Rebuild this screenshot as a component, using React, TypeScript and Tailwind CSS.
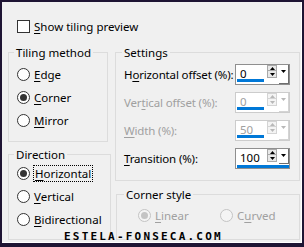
import type { ReactNode } from 'react';

const GRAY = 'text-[#a0a0a0]';

const Acc = ({ text, at }: { text: string; at: number }) => (
  <>
    {text.slice(0, at)}
    <span className="underline underline-offset-[2px]">{text[at]}</span>
    {text.slice(at + 1)}
  </>
);

const Radio = ({
  children,
  checked = false,
  disabled = false,
  focus = false,
}: {
  children: ReactNode;
  checked?: boolean;
  disabled?: boolean;
  focus?: boolean;
}) => (
  <div className="flex h-[23px] items-center">
    <span
      className={`flex h-[13px] w-[13px] shrink-0 items-center justify-center rounded-full border ${
        disabled ? 'border-[#c4c4c4] bg-[#f4f4f4]' : 'border-[#333333] bg-white'
      }`}
    >
      {checked && (
        <span className={`h-[7px] w-[7px] rounded-full ${disabled ? 'bg-[#c4c4c4]' : 'bg-[#333333]'}`} />
      )}
    </span>
    <span
      className={`leading-[15px] whitespace-nowrap ${disabled ? GRAY : 'text-black'} ${
        focus ? 'ml-[3px] border border-dotted border-black px-[1px]' : 'ml-[4px]'
      }`}
    >
      {children}
    </span>
  </div>
);

const Tri = ({ down = false, color }: { down?: boolean; color: string }) => (
  <svg width="5" height="3" viewBox="0 0 5 3" className="block">
    <path d={down ? 'M0 0H5L2.5 3Z' : 'M2.5 0L5 3H0Z'} fill={color} />
  </svg>
);

const Spin = ({ value, disabled = false, focus = false }: { value: string; disabled?: boolean; focus?: boolean }) => {
  const arrow = disabled ? '#b8b8b8' : '#000000';
  const btn = disabled ? 'border-[#d4d4d4] bg-[#f4f4f4]' : 'border-[#a8a8a8] bg-[#e8e8e8]';
  return (
    <div
      className={`relative flex h-[21px] w-[55px] shrink-0 border bg-white ${
        disabled ? 'border-[#cccccc]' : 'border-[#8f8f8f]'
      }`}
    >
      <div className={`w-[31px] pl-[4px] pt-[1px] leading-[15px] ${disabled ? GRAY : 'text-black'}`}>{value}</div>
      <div className="flex w-[10px] flex-col">
        <div className={`flex h-[6px] items-center justify-center border ${btn}`}>
          <Tri color={arrow} />
        </div>
        <div className={`flex h-[7px] items-center justify-center border border-t-0 ${btn}`}>
          <Tri down color={arrow} />
        </div>
      </div>
      <div
        className={`ml-[2px] flex w-[10px] justify-center border-r border-b pt-[5px] ${
          disabled ? 'border-[#d4d4d4] bg-white' : 'border-[#6e6e6e] bg-white'
        } ${focus ? 'mb-[4px]' : ''}`}
      >
        <Tri down color={arrow} />
      </div>
      <div
        className={`absolute h-[3px] bg-[#0078d7] ${
          focus ? 'right-[0px] bottom-[0px] left-[1px]' : 'bottom-[2px] left-[1px] w-[27px]'
        }`}
      />
    </div>
  );
};

const SpinRow = ({ label, value, disabled = false, focus = false }: { label: ReactNode; value: string; disabled?: boolean; focus?: boolean }) => (
  <div className="flex h-[21px] items-center">
    <span className={`min-w-0 flex-1 leading-[15px] tracking-[-0.15px] whitespace-nowrap ${disabled ? GRAY : 'text-black'}`}>
      {label}
    </span>
    <Spin value={value} disabled={disabled} focus={focus} />
  </div>
);

const App = () => {
  return (
    <div className="h-[247px] w-[304px] bg-[#1e1433] pt-[2px] pr-[2px] pb-[4px] pl-[2px] font-['Noto_Sans',sans-serif] text-[11.5px]">
      <div className="relative flex h-full flex-col border-r border-b border-white bg-[#f0f0f0] pl-[6px]">
        <div className="mt-[18px] ml-[9px] flex h-[13px] items-center">
          <span className="h-[13px] w-[13px] border border-[#333333] bg-white" />
          <span className="ml-[4px] leading-[15px] text-black">
            <Acc text="Show tiling preview" at={0} />
          </span>
        </div>

        <div className="mt-[12px] flex gap-[7px]">
          <div className="flex w-[100px] flex-col">
            <fieldset className="h-[97px] border border-[#dcdcdc]">
              <legend className="ml-[5px] px-[2px] leading-[15px] text-black">Tiling method</legend>
              <div className="px-[8px] pt-[3px]">
                <Radio>
                  <Acc text="Edge" at={0} />
                </Radio>
                <Radio checked>
                  <Acc text="Corner" at={0} />
                </Radio>
                <Radio>
                  <Acc text="Mirror" at={0} />
                </Radio>
              </div>
            </fieldset>
            <fieldset className="mt-[5px] h-[93px] border border-[#dcdcdc]">
              <legend className="ml-[5px] px-[2px] leading-[15px] text-black">Direction</legend>
              <div className="px-[8px]">
                <Radio checked focus>
                  <Acc text="Horizontal" at={0} />
                </Radio>
                <Radio>
                  <Acc text="Vertical" at={0} />
                </Radio>
                <Radio>
                  <Acc text="Bidirectional" at={0} />
                </Radio>
              </div>
            </fieldset>
          </div>

          <div className="flex w-[185px] flex-col">
            <fieldset className="h-[136px] border border-[#dcdcdc]">
              <legend className="ml-[6px] px-[2px] leading-[15px] text-black">Settings</legend>
              <div className="flex flex-col gap-[7px] pt-[4px] pr-[9px] pl-[8px]">
                <SpinRow label={<Acc text="Horizontal offset (%):" at={1} />} value="0" />
                <SpinRow label={<Acc text="Vertical offset (%):" at={3} />} value="0" disabled />
                <SpinRow label={<Acc text="Width (%):" at={0} />} value="50" disabled />
                <SpinRow label={<Acc text="Transition (%):" at={0} />} value="100" focus />
              </div>
            </fieldset>
            <fieldset className="mt-[6px] ml-[1px] h-[53px] border border-[#dcdcdc]">
              <legend className="ml-[7px] px-[2px] leading-[15px] text-black">Corner style</legend>
              <div className="flex pt-[2px] pl-[21px]">
                <div className="w-[82px]">
                  <Radio checked disabled>
                    <Acc text="Linear" at={0} />
                  </Radio>
                </div>
                <Radio disabled>
                  <Acc text="Curved" at={1} />
                </Radio>
              </div>
            </fieldset>
          </div>
        </div>

        <div className="absolute top-[229px] left-[62px] font-['DejaVu_Sans_Mono',monospace] text-[11px] leading-[11px] font-bold tracking-[2.2px] text-black">
          ESTELA-FONSECA.COM
        </div>
      </div>
    </div>
  );
};

export default App;
